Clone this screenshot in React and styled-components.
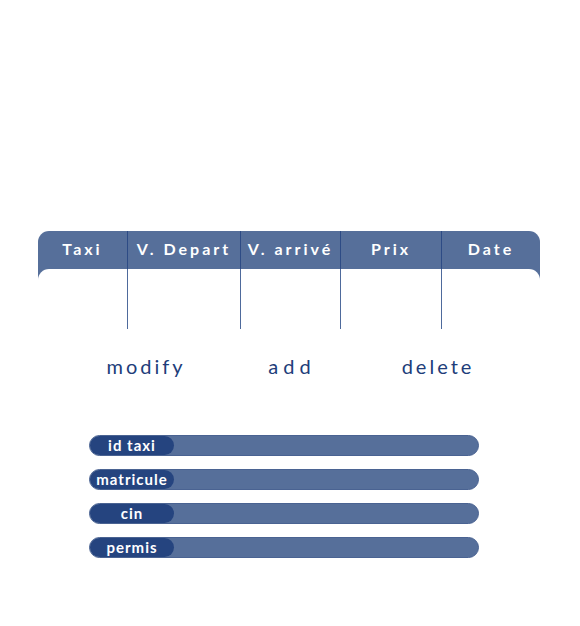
import * as React from "react";
import styled, { createGlobalStyle } from "styled-components";

const GlobalStyle = createGlobalStyle`
  html, body {
    margin: 0;
    padding: 0;
    background: #fff;
  }
  * {
    box-sizing: border-box;
  }
`;

const COLS = "89px 113px 100px 101px 99px";

const Page = styled.div`
  width: 580px;
  height: 626px;
  padding-top: 231px;
  font-family: "Lato", "DejaVu Sans", sans-serif;
  overflow: hidden;
`;

const Table = styled.div`
  width: 502px;
  margin-left: 38px;
  background: #566f9a;
  border-radius: 11px 11px 0 0;
`;

const HeaderRow = styled.div`
  display: grid;
  grid-template-columns: ${COLS};
  height: 38px;
`;

const HeadCell = styled.div`
  display: flex;
  align-items: center;
  justify-content: center;
  color: #fff;
  font-size: 16px;
  font-weight: 700;
  letter-spacing: 3px;
  border-left: ${(p) => (p.$first ? "none" : "1px solid #2d4b85")};
  padding-bottom: 3px;
`;

const Body = styled.div`
  display: grid;
  grid-template-columns: ${COLS};
  height: 60px;
  background: #fff;
  border-radius: 11px 11px 0 0;
`;

const BodyCell = styled.div`
  border-left: ${(p) => (p.$first ? "none" : "1px solid #4e6a9c")};
`;

const Actions = styled.div`
  display: grid;
  grid-template-columns: repeat(3, 146px);
  margin: 24px 0 0 73px;
  height: 26px;
`;

const Action = styled.button`
  all: unset;
  text-align: center;
  color: #213d7a;
  font-size: 20px;
  letter-spacing: ${(p) => (p.$wide ? "5px" : "3px")};
  line-height: 26px;
  cursor: pointer;
`;

const Fields = styled.div`
  display: flex;
  flex-direction: column;
  gap: 13px;
  margin: 56px 0 0 89px;
  width: 390px;
`;

const Field = styled.div`
  display: flex;
  height: 21px;
  background: #566f9a;
  border: 1px solid #4a6392;
  border-radius: 10.5px;
  overflow: hidden;
`;

const Label = styled.div`
  width: 84px;
  flex: none;
  display: flex;
  align-items: center;
  justify-content: center;
  background: #25447f;
  border-radius: 10px;
  color: #fff;
  font-size: 15px;
  font-weight: 700;
  letter-spacing: 1px;
  padding-bottom: 2px;
`;

const headers = ["Taxi", "V. Depart", "V. arrivé", "Prix", "Date"];
const fields = ["id taxi", "matricule", "cin", "permis"];

export default function App() {
  return (
    <Page>
      <GlobalStyle />
      <Table>
        <HeaderRow>
          {headers.map((h, i) => (
            <HeadCell key={h} $first={i === 0}>
              {h}
            </HeadCell>
          ))}
        </HeaderRow>
        <Body>
          {headers.map((h, i) => (
            <BodyCell key={h} $first={i === 0} />
          ))}
        </Body>
      </Table>

      <Actions>
        <Action>modify</Action>
        <Action $wide>add</Action>
        <Action>delete</Action>
      </Actions>

      <Fields>
        {fields.map((f) => (
          <Field key={f}>
            <Label>{f}</Label>
          </Field>
        ))}
      </Fields>
    </Page>
  );
}
